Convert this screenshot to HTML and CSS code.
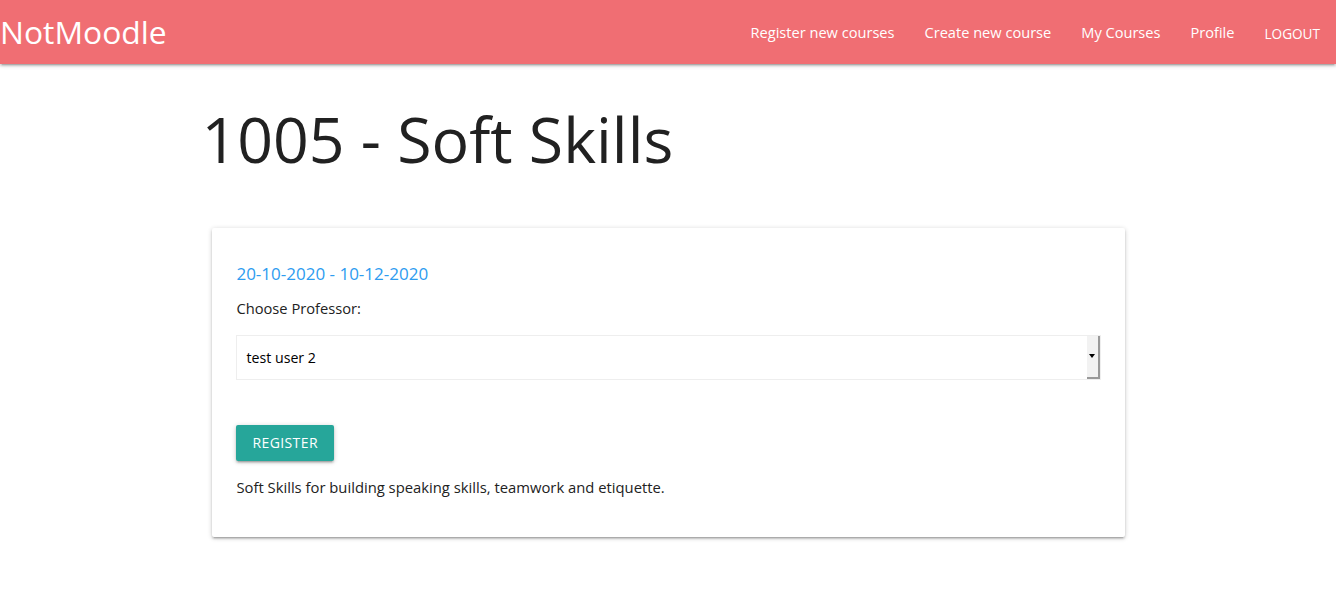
FILE: index.html
```html
<!DOCTYPE html>
<html lang="en">
<head>
<meta charset="utf-8">
<title>NotMoodle</title>
<link rel="stylesheet" href="styles.css">
</head>
<body>
<nav class="navbar">
  <a class="brand" href="#">NotMoodle</a>
  <ul class="nav-links">
    <li><a href="#">Register new courses</a></li>
    <li><a href="#">Create new course</a></li>
    <li><a href="#">My Courses</a></li>
    <li><a href="#">Profile</a></li>
    <li><a class="logout" href="#">LOGOUT</a></li>
  </ul>
</nav>
<main class="container">
  <h1 class="title">1005 - Soft Skills</h1>
  <div class="card">
    <p class="dates">20-10-2020 - 10-12-2020</p>
    <label class="label">Choose Professor:</label>
    <div class="select">
      <span class="select-value">test user 2</span>
      <span class="select-btn"><span class="caret"></span></span>
    </div>
    <button class="btn">REGISTER</button>
    <p class="desc">Soft Skills for building speaking skills, teamwork and etiquette.</p>
  </div>
</main>
</body>
</html>
```

FILE: styles.css
```css
* { box-sizing: border-box; }
html, body { margin: 0; padding: 0; }
body {
  font-family: "Open Sans", "Noto Sans", sans-serif;
  font-size: 15px;
  color: #222;
  background: #fff;
}
a { text-decoration: none; color: inherit; }

.navbar {
  height: 64px;
  background: #f06e73;
  display: flex;
  align-items: center;
  justify-content: space-between;
  box-shadow: 0 2px 2px 0 rgba(0,0,0,0.14), 0 3px 1px -2px rgba(0,0,0,0.12), 0 1px 5px 0 rgba(0,0,0,0.2);
  color: #fff;
}
.brand {
  font-size: 31.8px;
  line-height: 64px;
  padding-left: 0;
}
.nav-links {
  list-style: none;
  margin: 0;
  padding: 0 1px 0 0;
  display: flex;
  align-items: center;
  height: 64px;
}
.nav-links a {
  display: block;
  padding: 1px 15px 0;
  font-size: 14.6px;
  line-height: 63px;
}
.nav-links a.logout {
  font-size: 13.6px;
  padding-top: 3px;
}

.container {
  width: 70%;
  margin: 0 auto;
  padding-bottom: 60px;
}
.title {
  font-weight: 400;
  font-size: 62.6px;
  line-height: 1.1;
  margin: 41px 0 0 1px;
  color: #212121;
}
.card {
  margin: 54px 11px 0 12px;
  background: #fff;
  border-radius: 2px;
  padding: 24px 24px 40px;
  box-shadow: 0 2px 2px 0 rgba(0,0,0,0.14), 0 3px 1px -2px rgba(0,0,0,0.12), 0 1px 5px 0 rgba(0,0,0,0.2);
}
.dates {
  margin: 11px 0 0;
  font-size: 17px;
  color: #2e9cf0;
  line-height: 22px;
}
.label {
  display: block;
  margin-top: 13px;
  font-size: 14.7px;
  line-height: 20px;
}
.select {
  margin-top: 17px;
  height: 45px;
  border: 1px solid #eee;
  display: flex;
  align-items: stretch;
  justify-content: space-between;
}
.select-value {
  padding-left: 9px;
  font-size: 14.2px;
  line-height: 43px;
  color: #000;
}
.select-btn {
  width: 13px;
  background: #f2f2f2;
  border-right: 2px solid #999;
  border-bottom: 2px solid #999;
  display: flex;
  align-items: center;
  justify-content: center;
}
.caret {
  width: 0; height: 0;
  border-left: 3px solid transparent;
  border-right: 3px solid transparent;
  border-top: 4px solid #000;
}
.btn {
  display: block;
  margin-top: 45px;
  height: 36px;
  padding: 0 16px;
  background: #26a69a;
  color: #fff;
  border: none;
  border-radius: 2px;
  font-family: inherit;
  font-size: 14px;
  letter-spacing: 0.4px;
  box-shadow: 0 2px 2px 0 rgba(0,0,0,0.14), 0 3px 1px -2px rgba(0,0,0,0.12), 0 1px 5px 0 rgba(0,0,0,0.2);
}
.desc {
  margin: 16px 0 0;
  font-size: 14.8px;
  line-height: 20px;
  color: #222;
}
```
